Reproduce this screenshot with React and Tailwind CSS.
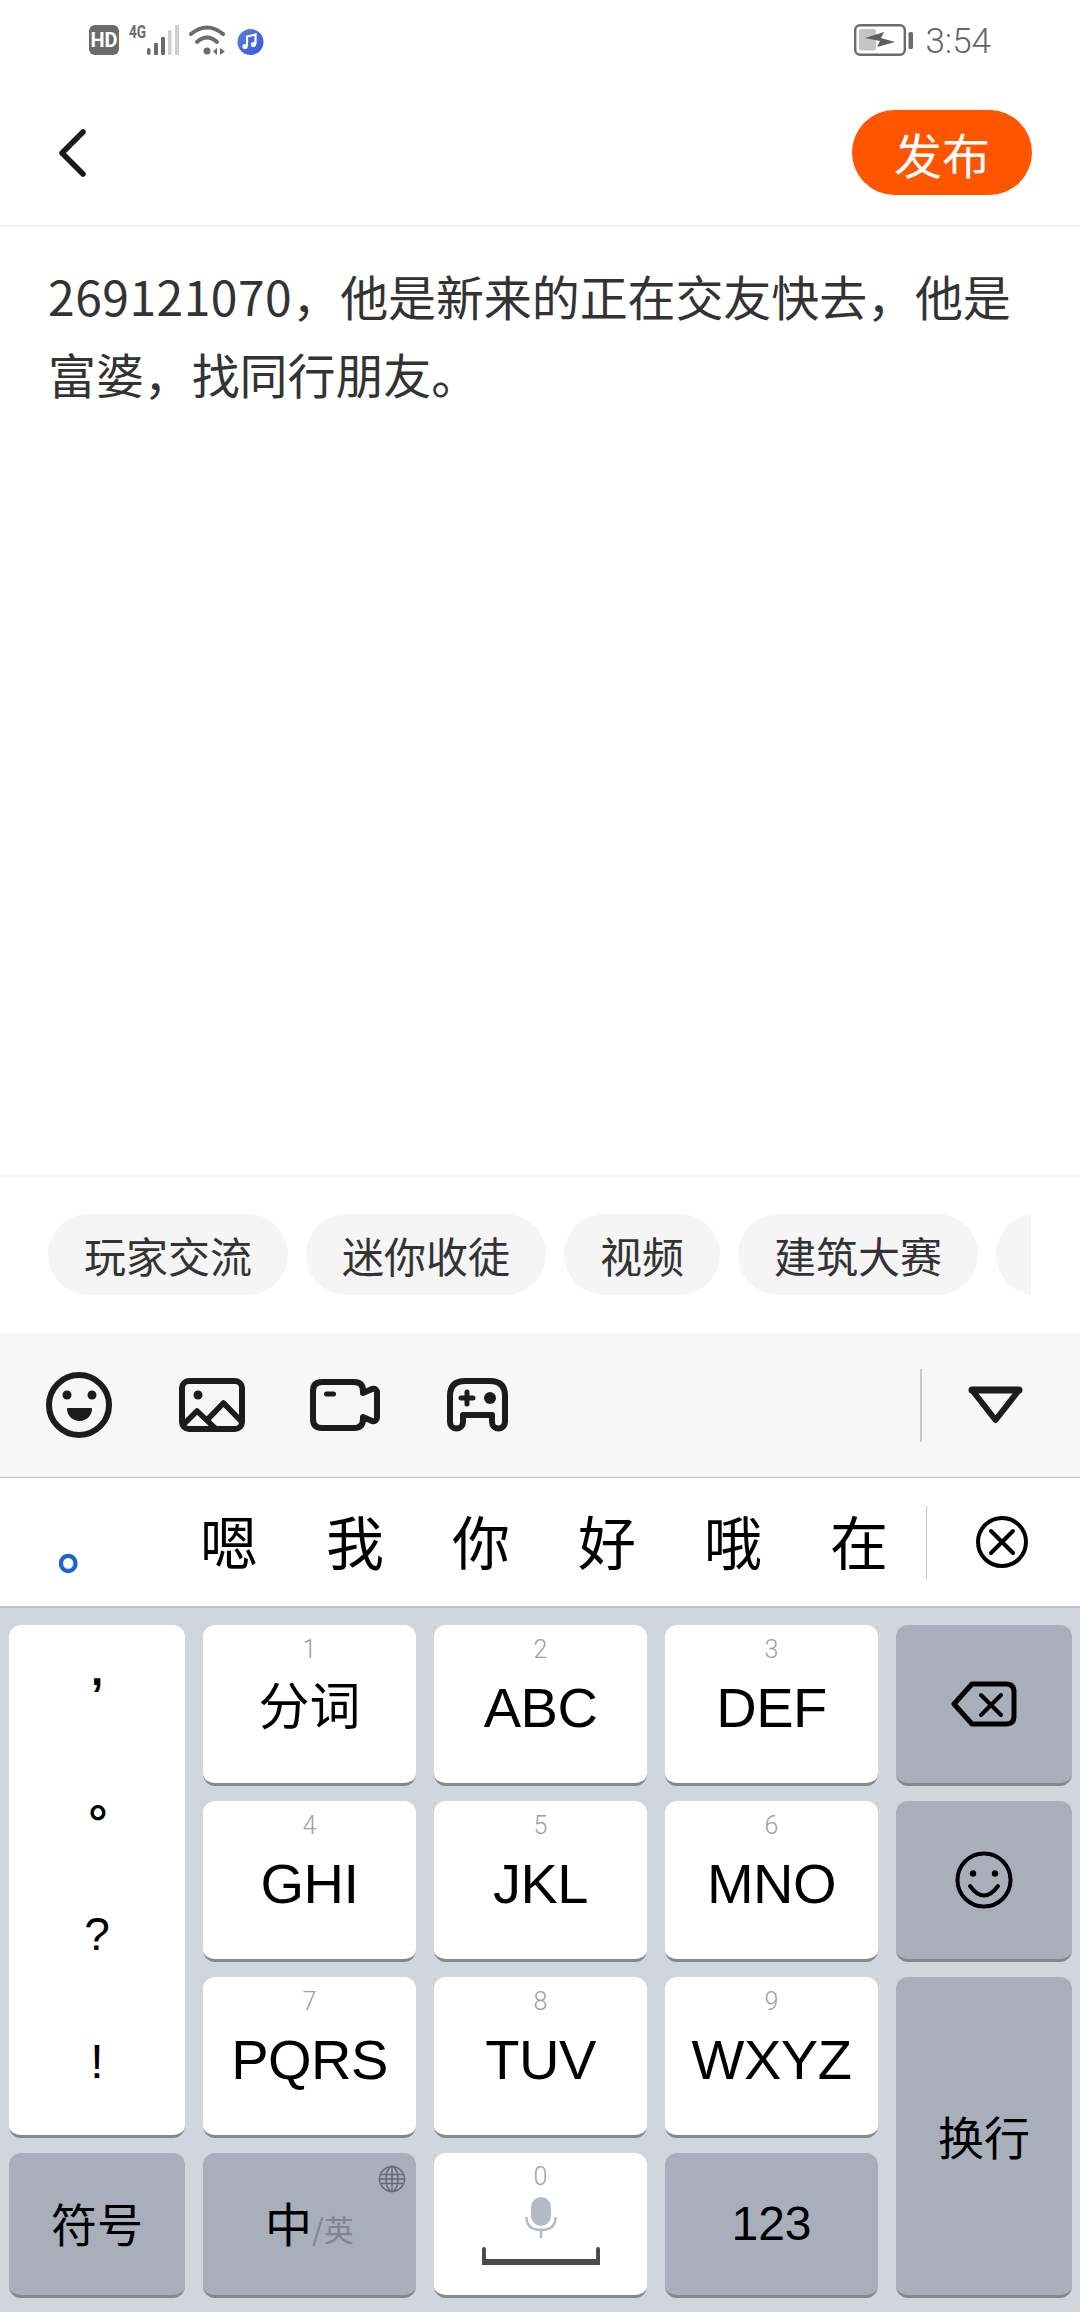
import React from "react";

const cjk = "font-['Noto_Sans_CJK_SC',sans-serif]";
const latin = "font-['Liberation_Sans','Noto_Sans_CJK_SC',sans-serif]";

function StatusBar() {
  return (
    <div className="h-[80px] flex items-center pl-[89px] pr-[89px] text-[#666]">
      <div className="w-[30px] h-[30px] rounded-[6px] bg-[#6b6b6b] text-white flex items-center justify-center font-['Roboto',sans-serif] font-bold text-[20px] leading-none">HD</div>
      <div className="ml-[10px] self-start mt-[23px] w-[18px] font-['Roboto',sans-serif] font-bold text-[19px] leading-[17px] text-[#6b6b6b] scale-x-[0.72] origin-left whitespace-nowrap">4G</div>
      <svg width="33" height="31" viewBox="0 0 33 31" className="mt-[1px]">
        <rect x="0" y="23" width="3.5" height="7" rx="1.7" fill="#6b6b6b" />
        <rect x="7" y="18" width="4" height="12" rx="1" fill="#6b6b6b" />
        <rect x="14" y="12" width="4" height="18" rx="1" fill="#6b6b6b" />
        <rect x="21" y="5" width="3.5" height="25" rx="1" fill="#cfcfcf" />
        <rect x="28" y="0" width="4" height="30" rx="1" fill="#cfcfcf" />
      </svg>
      <svg width="38" height="32" viewBox="0 0 38 32" className="ml-[9px]">
        <path d="M2 10 Q18 -3 34 10" fill="none" stroke="#6b6b6b" strokeWidth="4" strokeLinecap="round" />
        <path d="M8 18 Q18 9 28 18" fill="none" stroke="#6b6b6b" strokeWidth="4" strokeLinecap="round" />
        <circle cx="18" cy="27" r="3.5" fill="#6b6b6b" />
        <path d="M28 24 V31 L24 27.5Z M31 24 V31 L36 27.5Z" fill="#6b6b6b" />
      </svg>
      <svg width="27" height="28" viewBox="0 0 27 28" className="ml-[10px] mt-[3px]">
        <defs>
          <linearGradient id="mg" x1="0" y1="0" x2="1" y2="1">
            <stop offset="0" stopColor="#5a7fe0" />
            <stop offset="1" stopColor="#3a55d8" />
          </linearGradient>
        </defs>
        <circle cx="13.5" cy="14" r="13" fill="url(#mg)" />
        <path d="M10 18 V8.5 L18.5 6.5 V16" fill="none" stroke="#fff" strokeWidth="2.2" />
        <circle cx="8" cy="18.5" r="2.6" fill="#fff" />
        <circle cx="16.5" cy="16.5" r="2.6" fill="#fff" />
      </svg>
      <div className="ml-auto flex items-center">
        <svg width="60" height="32" viewBox="0 0 60 32">
          <rect x="1.2" y="1.2" width="49.6" height="29.6" rx="5" fill="none" stroke="#6b6b6b" strokeWidth="2.4" />
          <rect x="5" y="5" width="17" height="21.5" rx="2" fill="#c4c4c4" />
          <path d="M11 14 L30 8 L27 14 L41 18 L23 23 L26 17Z" fill="#5f5f5f" />
          <rect x="54.5" y="8" width="4.5" height="17" rx="1.5" fill="#6b6b6b" />
        </svg>
        <span className="ml-[11px] mt-[2px] font-['Roboto',sans-serif] font-light text-[35px] leading-none text-[#666]">3:54</span>
      </div>
    </div>
  );
}

function Header() {
  return (
    <div className="h-[147px] border-b-2 border-[#f2f2f2] flex items-center justify-between pl-[57px] pr-[48px]">
      <svg width="30" height="50" viewBox="0 0 30 50">
        <path d="M26 4 L5 25 L26 46" fill="none" stroke="#1a1a1a" strokeWidth="5.5" strokeLinecap="round" strokeLinejoin="round" />
      </svg>
      <div className={`w-[180px] h-[85px] rounded-full bg-[#ff5500] text-white text-[48px] leading-none flex items-center justify-center ${cjk}`}>发布</div>
    </div>
  );
}

function Chip({ children }) {
  return (
    <div className="h-[81px] rounded-full bg-[#f5f5f5] px-[36px] flex items-center text-[42px] leading-none text-[#333] shrink-0 whitespace-nowrap">
      {children}
    </div>
  );
}

function Chips() {
  return (
    <div className="h-[158px] border-t-2 border-[#f5f5f5] pt-[37px] pl-[48px]">
      <div className={`w-[983px] overflow-hidden flex gap-[18px] ${cjk}`}>
        <Chip>玩家交流</Chip>
        <Chip>迷你收徒</Chip>
        <Chip>视频</Chip>
        <Chip>建筑大赛</Chip>
        <div className="h-[81px] w-[160px] rounded-full bg-[#f5f5f5] shrink-0" />
      </div>
    </div>
  );
}

function Toolbar() {
  const c = "#1c1c1c";
  return (
    <div className="h-[145px] bg-[#f7f7f7] border-b border-[#bdbdbd] flex items-center pl-[46px] pr-[57px]">
      <svg width="66" height="66" viewBox="0 0 66 66">
        <circle cx="33" cy="33" r="30" fill="none" stroke={c} strokeWidth="6" />
        <circle cx="21" cy="23" r="4.5" fill={c} />
        <circle cx="46" cy="23" r="4.5" fill={c} />
        <path d="M21 37 Q21 36 22 36 H45 Q46 36 46 37 C46 44 40 49 33.5 49 C27 49 21 44 21 37Z" fill={c} />
      </svg>
      <svg width="66" height="54" viewBox="0 0 66 54" className="ml-[67px]">
        <rect x="3" y="3" width="60" height="48" rx="7" fill="none" stroke={c} strokeWidth="6" />
        <circle cx="19" cy="17" r="4.5" fill={c} />
        <path d="M4 47 L18 33 L36 50 M29 41 L44.5 25 L62 43" fill="none" stroke={c} strokeWidth="5.5" strokeLinejoin="round" />
      </svg>
      <svg width="70" height="52" viewBox="0 0 70 52" className="ml-[65px]">
        <path d="M12 3 H44 Q53 3 53 12 V14 L62 10 Q67 9 67 14 V38 Q67 43 62 42 L53 38 V40 Q53 49 44 49 H12 Q3 49 3 40 V12 Q3 3 12 3Z" fill="none" stroke={c} strokeWidth="6" strokeLinejoin="round" />
        <path d="M16.5 15 H23.5" stroke={c} strokeWidth="5" strokeLinecap="round" />
      </svg>
      <svg width="61" height="54" viewBox="0 0 61 54" className="ml-[67px]">
        <path d="M3 18 Q3 3 18 3 H43 Q58 3 58 18 V44 A6.5 6.5 0 0 1 45 44 V37 H16 V44 A6.5 6.5 0 0 1 3 44Z" fill="none" stroke={c} strokeWidth="6" strokeLinejoin="round" />
        <path d="M14 20 H26 M20 14 V26" stroke={c} strokeWidth="5" strokeLinecap="round" />
        <circle cx="43" cy="20" r="6" fill={c} />
      </svg>
      <div className="ml-auto w-[2px] h-[73px] bg-[#c8c8c8]" />
      <svg width="55" height="38" viewBox="0 0 55 38" className="ml-[46px]">
        <path d="M4 4 H51 L27.5 34Z" fill="none" stroke={c} strokeWidth="6" strokeLinejoin="round" />
        <path d="M4 4 H51" stroke={c} strokeWidth="7" strokeLinecap="round" />
      </svg>
    </div>
  );
}

function Candidates() {
  const words = ["嗯", "我", "你", "好", "哦", "在"];
  return (
    <div className={`h-[128px] bg-white flex items-center pl-[57px] pr-[52px] ${cjk}`}>
      <span className="w-[143px] text-[58px] leading-none text-[#1f63d8] font-bold shrink-0 pt-[2px]">。</span>
      <div className="flex gap-[68px] text-[58px] leading-none text-black pb-[5px]">
        {words.map((w) => (
          <span key={w} className="w-[58px]">{w}</span>
        ))}
      </div>
      <div className="ml-[38px] w-[1px] h-[73px] bg-[#c8c8c8]" />
      <svg width="52" height="52" viewBox="0 0 52 52" className="ml-auto">
        <circle cx="26" cy="26" r="24" fill="none" stroke="#000" strokeWidth="4" />
        <path d="M15 15 L37 37 M37 15 L15 37" stroke="#000" strokeWidth="4" strokeLinecap="round" />
      </svg>
    </div>
  );
}

function Key({ num, label }) {
  return (
    <div className={`rounded-[12px] bg-white border-b-[3px] border-[#87888e] flex flex-col items-center pt-[12px] ${latin}`}>
      <span className="text-[25px] leading-[26px] text-[#a0a0a0] font-['Roboto',sans-serif] font-light">{num}</span>
      <span className="mt-[15px] text-[51px] leading-[60px] text-black whitespace-nowrap">{label}</span>
    </div>
  );
}

const gray = "rounded-[12px] bg-[#a8afbb] border-b-[3px] border-[#85878e] flex items-center justify-center text-black";
const big = "text-[56px] tracking-[-0.5px]";

function Keyboard() {
  return (
    <div className={`flex-1 bg-[#d1d5de] border-t-2 border-[#bfc1c6] pt-[17px] pl-[9px] grid grid-cols-[176px_213px_213px_213px_176px] grid-rows-[161px_161px_161px_145px] gap-x-[18px] gap-y-[15px] content-start ${cjk}`}>
      <div className="row-span-3 rounded-[12px] bg-white border-b-[3px] border-[#87888e] flex flex-col items-center pb-[16px] text-black">
        <div className="h-[128px] flex items-center justify-center pb-[34px] text-[44px] leading-none font-['Liberation_Sans',sans-serif] font-bold">,</div>
        <div className="h-[128px] flex items-center justify-center pb-[30px] pl-[30px] text-[46px] leading-none font-bold">。</div>
        <div className="h-[128px] flex items-center justify-center text-[46px] leading-none font-['Liberation_Sans',sans-serif]">?</div>
        <div className="h-[128px] flex items-center justify-center pt-[10px] text-[48px] leading-none font-['Liberation_Sans',sans-serif]">!</div>
      </div>
      <Key num="1" label="分词" />
      <Key num="2" label={<span className={big}>ABC</span>} />
      <Key num="3" label={<span className={big}>DEF</span>} />
      <div className={gray}>
        <svg width="66" height="46" viewBox="0 0 66 46">
          <path d="M21 3 H55 Q63 3 63 11 V35 Q63 43 55 43 H21 L3 23Z" fill="none" stroke="#000" strokeWidth="5" strokeLinejoin="round" />
          <path d="M30 14 L50 34 M50 14 L30 34" stroke="#000" strokeWidth="4" strokeLinecap="round" />
        </svg>
      </div>
      <Key num="4" label={<span className={big}>GHI</span>} />
      <Key num="5" label={<span className={big}>JKL</span>} />
      <Key num="6" label={<span className={big}>MNO</span>} />
      <div className={gray}>
        <svg width="58" height="58" viewBox="0 0 58 58">
          <circle cx="29" cy="29" r="26.5" fill="none" stroke="#000" strokeWidth="4" />
          <circle cx="18" cy="22.5" r="3.2" fill="#000" />
          <circle cx="40" cy="22.5" r="3.2" fill="#000" />
          <path d="M15 35 Q29 54 43 35" fill="none" stroke="#000" strokeWidth="4" strokeLinecap="round" />
        </svg>
      </div>
      <Key num="7" label={<span className={big}>PQRS</span>} />
      <Key num="8" label={<span className={big}>TUV</span>} />
      <Key num="9" label={<span className={big}>WXYZ</span>} />
      <div className={`${gray} row-span-2 pb-[2px] text-[46px] leading-none`}>换行</div>
      <div className={`${gray} pb-[5px] text-[46px] leading-none`}>符号</div>
      <div className={`${gray} relative pb-[5px]`}>
        <span className="text-[47px] leading-none">中</span>
        <span className="text-[30px] leading-none text-[#80858f] self-center mt-[12px]">/英</span>
        <svg width="28" height="28" viewBox="0 0 28 28" className="absolute top-[12px] right-[10px]">
          <g fill="none" stroke="#666b75" strokeWidth="1.5">
            <circle cx="14" cy="14" r="12.5" />
            <ellipse cx="14" cy="14" rx="6" ry="12.5" />
            <path d="M14 1.5 V26.5 M2 9.5 H26 M2 18.5 H26 M1.5 14 H26.5" />
          </g>
        </svg>
      </div>
      <div className="rounded-[12px] bg-white border-b-[3px] border-[#87888e] flex flex-col items-center pt-[12px]">
        <span className="text-[25px] leading-[24px] text-[#a0a0a0] font-['Roboto',sans-serif] font-light">0</span>
        <svg width="32" height="41" viewBox="0 0 32 41" className="mt-[8px]">
          <rect x="6" y="0" width="20" height="29" rx="10" fill="#b4bac4" />
          <path d="M1.5 20 C1.5 29 7 33 16 33 C25 33 30.5 29 30.5 20" fill="none" stroke="#b4bac4" strokeWidth="2.4" />
          <path d="M16 33 V41" stroke="#b4bac4" strokeWidth="2.4" />
        </svg>
        <svg width="118" height="18" viewBox="0 0 120 18" preserveAspectRatio="none" className="mt-[9px]">
          <path d="M0 2 Q0 0 2 0 Q4 0 4 2 V12 H116 V2 Q116 0 118 0 Q120 0 120 2 V18 H0Z" fill="#4a4a4a" />
        </svg>
      </div>
      <div className={`${gray} text-[48px] leading-none font-['Liberation_Sans',sans-serif]`}>123</div>
    </div>
  );
}

export default function App() {
  return (
    <div className={`w-[1080px] h-[2312px] bg-white flex flex-col overflow-hidden ${cjk}`}>
      <StatusBar />
      <Header />
      <div className="h-[948px] pt-[29px] px-[48px] text-[48px] leading-[78px] tracking-[-0.1px] text-[#333]">
        <span className="tracking-[0.5px]">269121070</span>，他是新来的正在交友快去，他是富婆，找同行朋友。
      </div>
      <Chips />
      <Toolbar />
      <Candidates />
      <Keyboard />
    </div>
  );
}
